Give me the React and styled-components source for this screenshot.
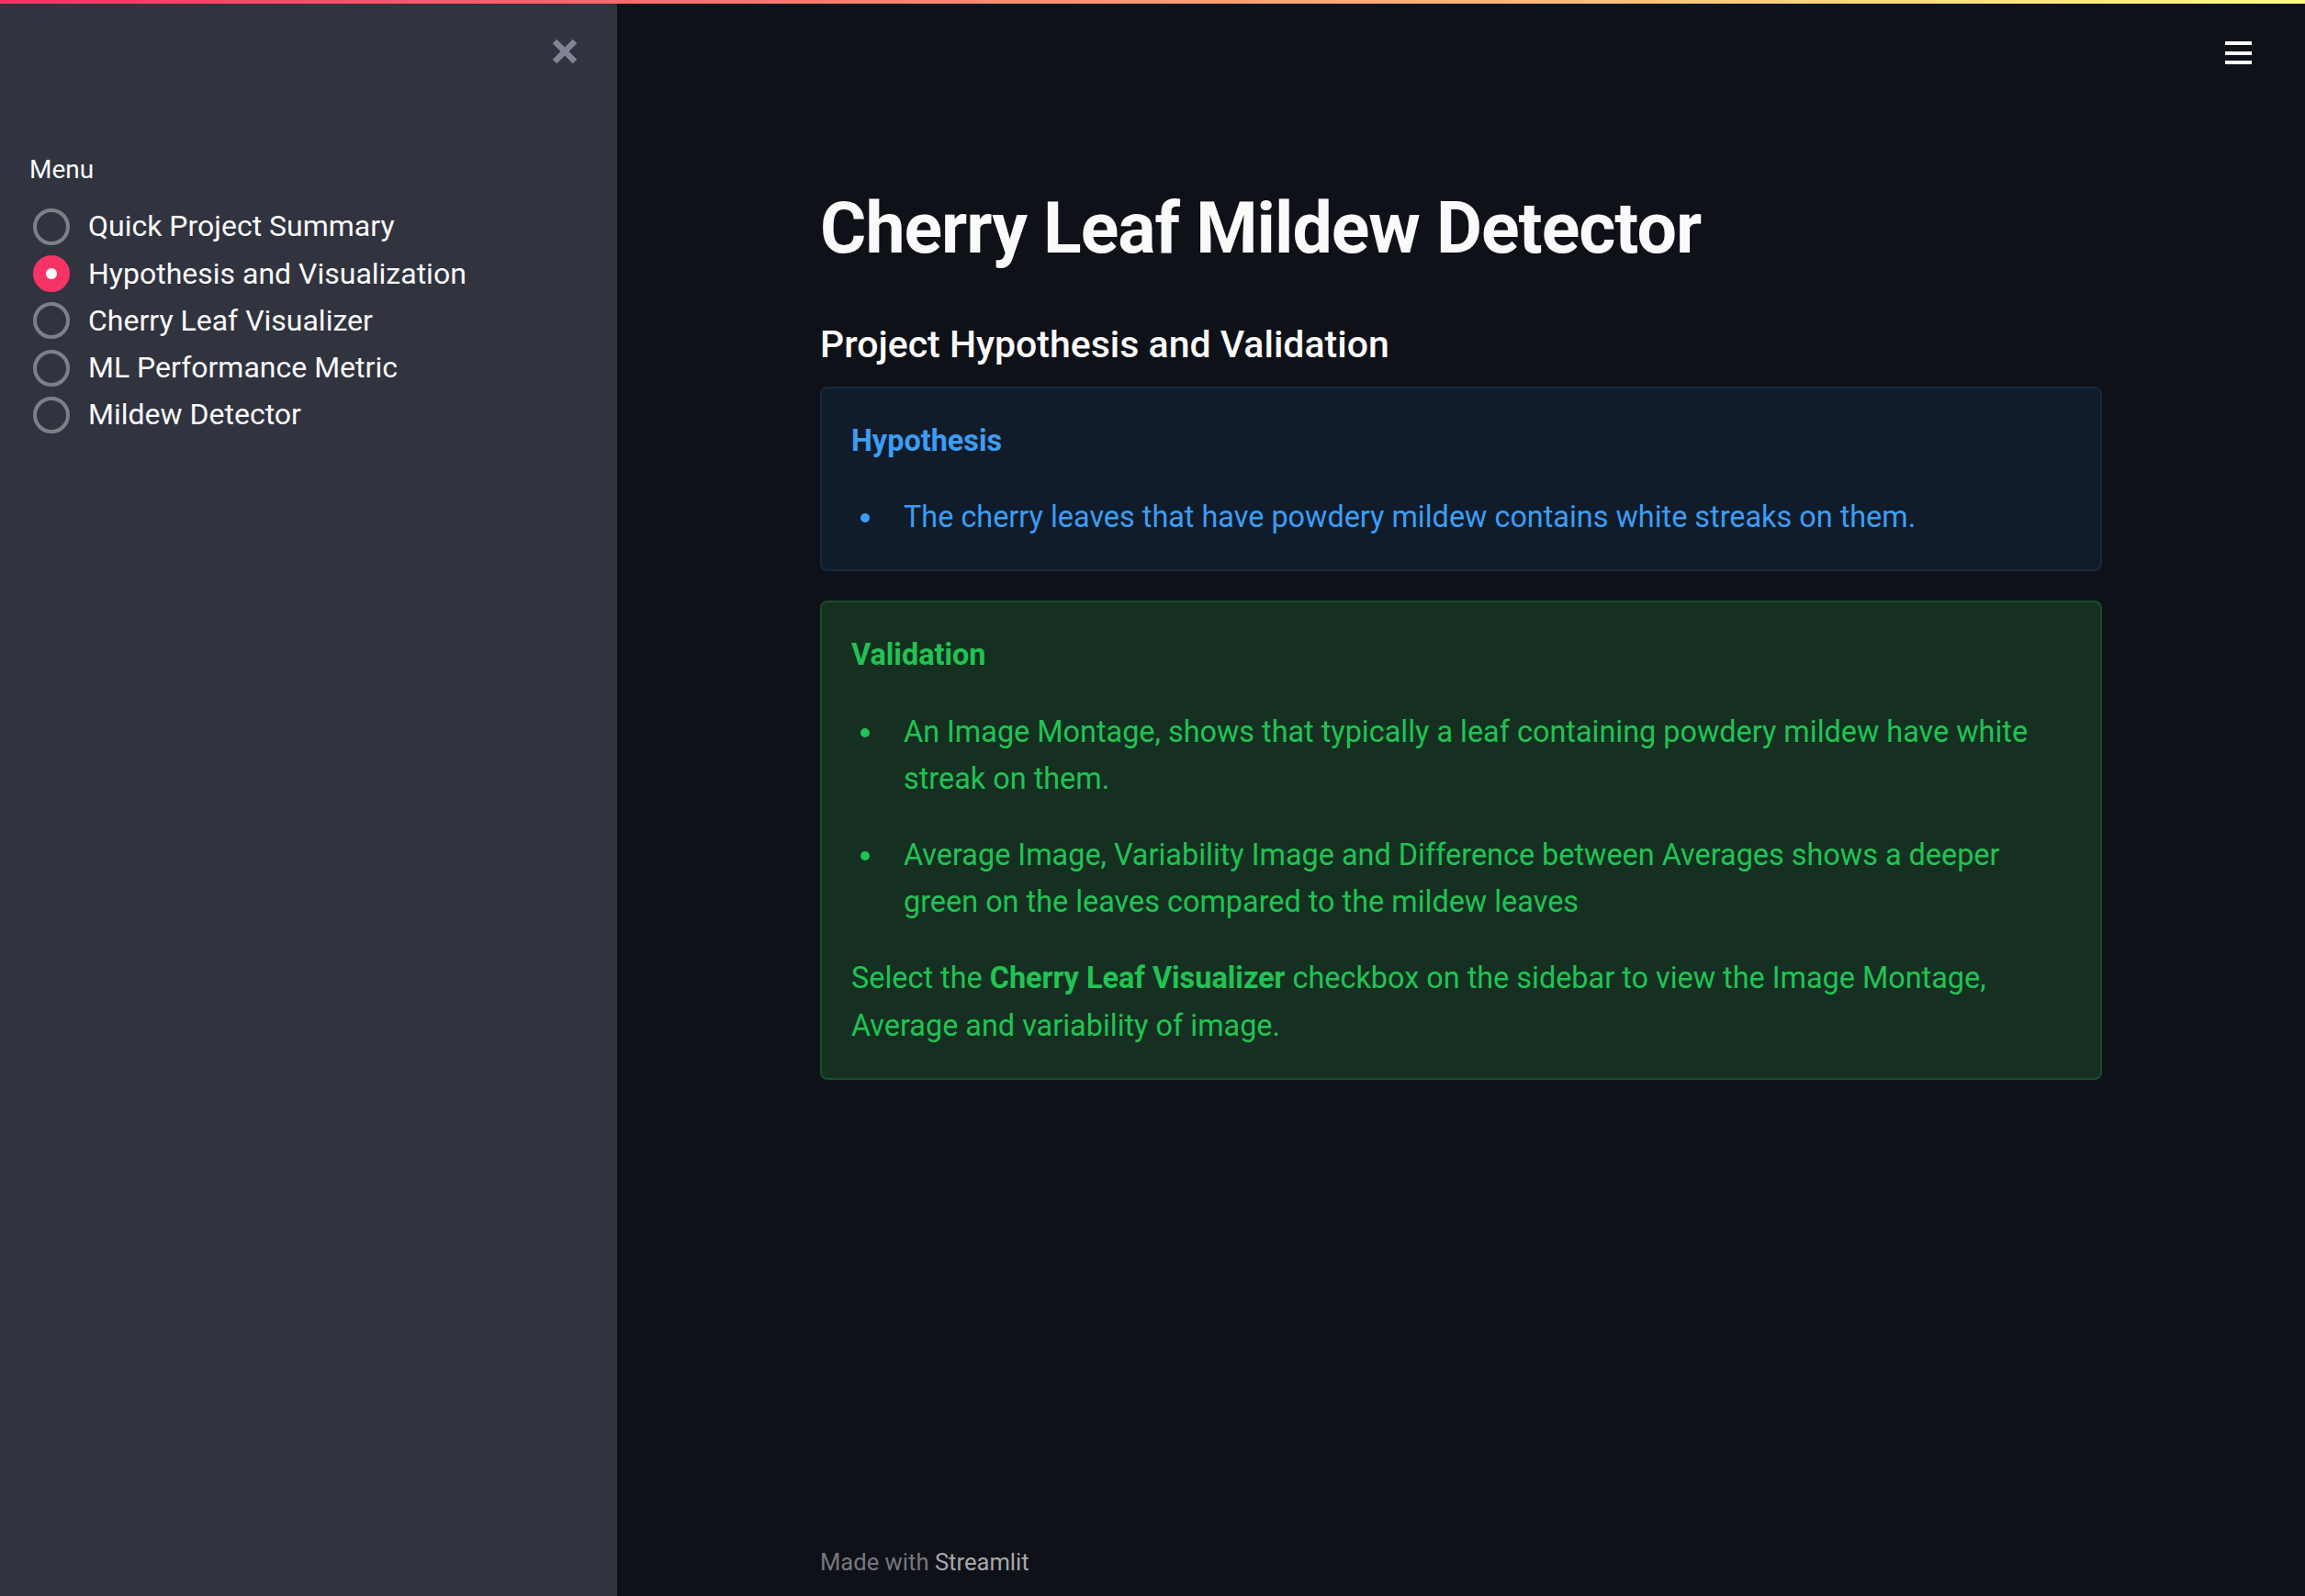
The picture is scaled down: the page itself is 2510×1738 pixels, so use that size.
import React from 'react'
import styled, { createGlobalStyle } from 'styled-components'

const GlobalStyle = createGlobalStyle`
  html, body {
    margin: 0;
    padding: 0;
    background: #0e1117;
  }
  body {
    font-family: Roboto, "Noto Sans", sans-serif;
    color: #fafafa;
  }
  * {
    box-sizing: border-box;
  }
`

const Page = styled.div`
  display: flex;
  flex-direction: column;
  height: 1738px;
  overflow: hidden;
`

const Decoration = styled.div`
  height: 4px;
  flex: none;
  background: linear-gradient(90deg, #f63366, #fffd80);
`

const Layout = styled.div`
  display: flex;
  flex: 1;
  min-height: 0;
`

const Sidebar = styled.aside`
  width: 672px;
  flex: none;
  background: #31333f;
  padding: 0 32px;
  display: flex;
  flex-direction: column;
`

const SidebarHeader = styled.div`
  display: flex;
  justify-content: flex-end;
  padding: 38px 11px 0 0;
`

const CloseButton = styled.button`
  width: 28px;
  height: 28px;
  padding: 0;
  border: none;
  background: none;
  display: flex;
  cursor: pointer;
`

const MenuLabel = styled.div`
  margin-top: 92.5px;
  font-size: 28px;
  line-height: 44.8px;
  color: #fafafa;
`

const RadioGroup = styled.div`
  display: flex;
  flex-direction: column;
  margin-top: 14px;
`

const RadioItem = styled.label`
  display: flex;
  align-items: center;
  gap: 20px;
  padding-left: 4px;
  font-size: 32px;
  line-height: 51.2px;
  color: #fafafa;
  cursor: pointer;
`

const RadioCircle = styled.span`
  width: 40px;
  height: 40px;
  flex: none;
  border-radius: 50%;
  border: 4px solid ${p => (p.$checked ? '#f63366' : '#7e8089')};
  background: ${p => (p.$checked ? '#f63366' : 'transparent')};
  display: flex;
  align-items: center;
  justify-content: center;

  &::after {
    content: '';
    display: ${p => (p.$checked ? 'block' : 'none')};
    width: 12px;
    height: 12px;
    border-radius: 50%;
    background: #fafafa;
  }
`

const Main = styled.main`
  flex: 1;
  display: flex;
  flex-direction: column;
`

const MainHeader = styled.div`
  display: flex;
  justify-content: flex-end;
  padding: 41px 58px 0 0;
`

const Hamburger = styled.button`
  width: 29px;
  height: 25px;
  padding: 0;
  border: none;
  background: none;
  display: flex;
  flex-direction: column;
  justify-content: space-between;
  cursor: pointer;

  span {
    display: block;
    height: 4px;
    background: #fafafa;
  }
`

const Content = styled.div`
  flex: 1;
  width: 100%;
  max-width: 1460px;
  margin: 0 auto;
  padding: 131px 32px 0;
  display: flex;
  flex-direction: column;
`

const FooterWrap = styled.div`
  width: 100%;
  max-width: 1460px;
  margin: 0 auto;
  padding: 0 32px;
`

const Title = styled.h1`
  margin: 0;
  font-size: 77px;
  line-height: 96px;
  font-weight: 700;
  color: #fafafa;
  letter-spacing: -1px;
`

const Subheader = styled.h3`
  margin: 54px 0 0;
  font-size: 41px;
  line-height: 48px;
  font-weight: 500;
  color: #fafafa;
`

const Alert = styled.div`
  margin-top: ${p => p.$top}px;
  border: 2px solid ${p => p.$border};
  background: ${p => p.$bg};
  color: ${p => p.$color};
  border-radius: 8px;
  padding: 32px 32px 31px;
  display: flex;
  flex-direction: column;
  gap: 32px;
  font-size: 32.4px;
  line-height: 51.2px;

  p {
    margin: 0;
  }
`

const AlertTitle = styled.p`
  font-weight: 700;
`

const List = styled.ul`
  margin: 0;
  padding-left: 57px;
  list-style: none;
  display: flex;
  flex-direction: column;
  gap: 32px;
`

const Item = styled.li`
  position: relative;

  &::before {
    content: '';
    position: absolute;
    left: -47px;
    top: 21px;
    width: 10px;
    height: 10px;
    border-radius: 50%;
    background: currentColor;
  }
`

const Footer = styled.footer`
  font-size: 25.6px;
  line-height: 41px;
  color: #77787e;
  padding-bottom: 16px;

  strong {
    font-weight: 400;
    color: #a6a7ab;
  }
`

const pages = [
  'Quick Project Summary',
  'Hypothesis and Visualization',
  'Cherry Leaf Visualizer',
  'ML Performance Metric',
  'Mildew Detector',
]

const CloseIcon = () => (
  <svg width="28" height="28" viewBox="0 0 28 28">
    <path d="M3 3 L25 25 M25 3 L3 25" stroke="#808495" strokeWidth="6.5" strokeLinecap="butt" />
  </svg>
)

const App = () => (
  <Page>
    <GlobalStyle />
    <Decoration />
    <Layout>
      <Sidebar>
        <SidebarHeader>
          <CloseButton aria-label="Close sidebar">
            <CloseIcon />
          </CloseButton>
        </SidebarHeader>
        <MenuLabel>Menu</MenuLabel>
        <RadioGroup>
          {pages.map((name, i) => (
            <RadioItem key={name}>
              <RadioCircle $checked={i === 1} />
              {name}
            </RadioItem>
          ))}
        </RadioGroup>
      </Sidebar>
      <Main>
        <MainHeader>
          <Hamburger aria-label="Menu">
            <span />
            <span />
            <span />
          </Hamburger>
        </MainHeader>
        <Content>
          <Title>Cherry Leaf Mildew Detector</Title>
          <Subheader>Project Hypothesis and Validation</Subheader>
          <Alert $top={22} $bg="#111c2b" $border="#162a40" $color="#3d9df3">
            <AlertTitle>Hypothesis</AlertTitle>
            <List>
              <Item>The cherry leaves that have powdery mildew contains white streaks on them.</Item>
            </List>
          </Alert>
          <Alert $top={32} $bg="#153021" $border="#1d4a2c" $color="#21c354">
            <AlertTitle>Validation</AlertTitle>
            <List>
              <Item>
                An Image Montage, shows that typically a leaf containing powdery mildew have white streak on them.
              </Item>
              <Item>
                Average Image, Variability Image and Difference between Averages shows a deeper green on the leaves
                compared to the mildew leaves
              </Item>
            </List>
            <p>
              Select the <strong>Cherry Leaf Visualizer</strong> checkbox on the sidebar to view the Image Montage,
              Average and variability of image.
            </p>
          </Alert>
        </Content>
        <FooterWrap>
          <Footer>
            Made with <strong>Streamlit</strong>
          </Footer>
        </FooterWrap>
      </Main>
    </Layout>
  </Page>
)

export default App
